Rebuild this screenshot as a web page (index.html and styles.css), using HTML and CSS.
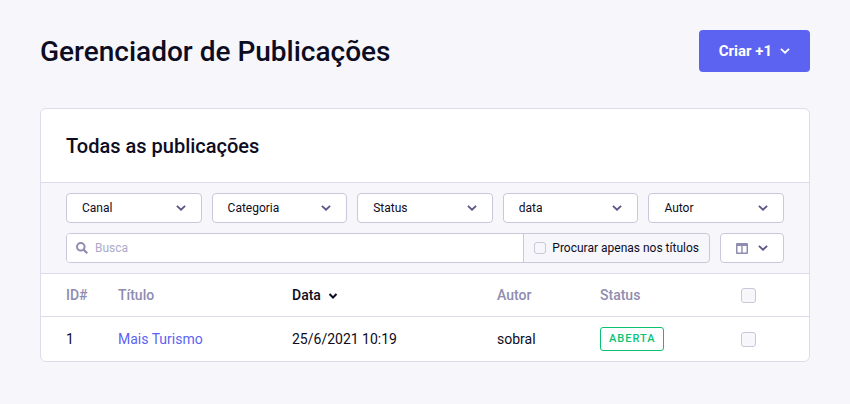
FILE: index.html
```html
<!DOCTYPE html>
<html lang="pt-BR">
<head>
<meta charset="utf-8">
<meta name="viewport" content="width=device-width, initial-scale=1">
<title>Gerenciador de Publicações</title>
<link rel="stylesheet" href="styles.css">
</head>
<body>
<svg class="sprite" aria-hidden="true">
  <symbol id="chevron" viewBox="0 0 10 10"><path d="M0.900 2.800 5 6.700 9.100 2.800" fill="none" stroke="currentColor" stroke-width="1.800"/></symbol>
</svg>
<header class="page-header">
  <h1>Gerenciador de Publicações</h1>
  <button type="button" class="create">Criar +1 <svg class="chevron"><use href="#chevron"/></svg></button>
</header>
<main class="card">
  <h2>Todas as publicações</h2>
  <form class="filters">
    <div class="filter-row">
      <div class="filter"><select aria-label="Canal"><option>Canal</option></select><svg class="chevron"><use href="#chevron"/></svg></div>
      <div class="filter"><select aria-label="Categoria"><option>Categoria</option></select><svg class="chevron"><use href="#chevron"/></svg></div>
      <div class="filter"><select aria-label="Status"><option>Status</option></select><svg class="chevron"><use href="#chevron"/></svg></div>
      <div class="filter"><select aria-label="data"><option>data</option></select><svg class="chevron"><use href="#chevron"/></svg></div>
      <div class="filter"><select aria-label="Autor"><option>Autor</option></select><svg class="chevron"><use href="#chevron"/></svg></div>
    </div>
    <div class="search-row">
      <div class="search">
        <div class="search-field">
          <svg class="search-icon" viewBox="0 0 12 12" aria-hidden="true"><circle cx="4.800" cy="4.800" r="3.800" fill="none" stroke="currentColor" stroke-width="2"/><path d="M7.700 7.700 11.200 11.200" stroke="currentColor" stroke-width="2.200"/></svg>
          <input type="search" placeholder="Busca" aria-label="Busca">
        </div>
        <label class="only-titles"><input type="checkbox" class="check check-small">Procurar apenas nos títulos</label>
      </div>
      <button type="button" class="columns" aria-label="Colunas">
        <svg class="columns-icon" viewBox="0 0 12 11"><path fill="currentColor" fill-rule="evenodd" d="M1 0H11Q12 0 12 1V10Q12 11 11 11H1Q0 11 0 10V1Q0 0 1 0ZM1.500 3V9.500H5.300V3ZM6.700 3V9.500H10.500V3Z"/></svg>
        <svg class="chevron"><use href="#chevron"/></svg>
      </button>
    </div>
  </form>
  <table>
    <colgroup><col class="col-id"><col class="col-title"><col class="col-date"><col class="col-author"><col class="col-status"><col class="col-check"></colgroup>
    <thead>
      <tr>
        <th scope="col">ID#</th>
        <th scope="col">Título</th>
        <th scope="col" class="sorted" aria-sort="descending">Data <svg class="chevron" viewBox="0 0 10 10"><path d="M1.500 3 5 6.500 8.500 3" fill="none" stroke="currentColor" stroke-width="2"/></svg></th>
        <th scope="col">Autor</th>
        <th scope="col">Status</th>
        <th scope="col"><input type="checkbox" class="check" aria-label="Selecionar todas"></th>
      </tr>
    </thead>
    <tbody>
      <tr>
        <td>1</td>
        <td><a href="#">Mais Turismo</a></td>
        <td>25/6/2021 10:19</td>
        <td>sobral</td>
        <td><span class="status">Aberta</span></td>
        <td><input type="checkbox" class="check" aria-label="Selecionar Mais Turismo"></td>
      </tr>
    </tbody>
  </table>
</main>
</body>
</html>
```
FILE: styles.css
```css
* { box-sizing: border-box; }

body {
  margin: 0;
  padding: 30px 40px;
  background: #f6f6fb;
  color: #0d0c22;
  font: 14px/20px Roboto, sans-serif;
}

h1, h2 { margin: 0; font-weight: 500; }
h1 { font-size: 28px; line-height: 44px; }
h2 { padding: 26px 25px 24px; font-size: 20px; line-height: 23px; }

button, input, select { font: inherit; color: inherit; }

.sprite { display: none; }

.chevron { display: block; flex: none; width: 10px; height: 10px; }

.page-header {
  display: flex;
  justify-content: space-between;
  align-items: flex-start;
  margin-bottom: 34px;
}

.create {
  display: flex;
  align-items: center;
  gap: 8px;
  height: 42px;
  padding: 0 20px;
  border: 0;
  border-radius: 4px;
  background: #5c63f1;
  color: #fff;
  font-size: 15px;
  font-weight: 700;
}

.card {
  overflow: hidden;
  border: 1px solid #dddcec;
  border-radius: 6px;
  background: #fff;
}

.filters {
  display: grid;
  gap: 10px;
  padding: 10px 25px;
  border: solid #dddcec;
  border-width: 1px 0;
  background: #f6f6fb;
  font-size: 12px;
}

.filter-row {
  display: grid;
  grid-template-columns: repeat(5, 1fr);
  gap: 10px;
}

.filter { display: grid; align-items: center; }
.filter > * { grid-area: 1 / 1; }
.filter .chevron { justify-self: end; margin-right: 16px; color: #5a5585; pointer-events: none; }

select {
  appearance: none;
  width: 100%;
  height: 30px;
  padding: 0 30px 0 15px;
  border: 1px solid #c9c8da;
  border-radius: 4px;
  background: #fff;
}

.search-row { display: flex; gap: 10px; }

.search {
  display: flex;
  flex: 1;
  height: 30px;
  border: 1px solid #c9c8da;
  border-radius: 4px;
}

.search-field {
  display: flex;
  flex: 1;
  align-items: center;
  gap: 7px;
  padding: 0 9px;
  border-radius: 3px 0 0 3px;
  background: #fff;
}

.search-field input {
  flex: 1;
  min-width: 0;
  padding: 0;
  border: 0;
  outline: 0;
  background: none;
}

.search-field input::placeholder { color: #adabca; }

.search-icon { width: 12px; height: 12px; color: #8e8cb0; }

.only-titles {
  display: flex;
  align-items: center;
  gap: 6px;
  padding: 0 10px;
  border-left: 1px solid #c9c8da;
}

.check {
  appearance: none;
  display: block;
  width: 15px;
  height: 15px;
  margin: 0;
  border: 1px solid #c9c8da;
  border-radius: 3px;
  background: #f6f6fb;
}

.check:checked { background: #5c63f1; }
.check-small { width: 12px; height: 12px; }

.columns {
  display: flex;
  align-items: center;
  justify-content: space-between;
  width: 64px;
  height: 30px;
  padding: 0 15px;
  border: 1px solid #c9c8da;
  border-radius: 4px;
  background: #fff;
  color: #5a5585;
}

.columns-icon { width: 12px; height: 11px; color: #8e8cb0; }

table {
  width: 100%;
  table-layout: fixed;
  border-spacing: 0;
}

.col-id { width: 77px; }
.col-title { width: 174px; }
.col-date { width: 205px; }
.col-author { width: 103px; }
.col-status { width: 141px; }
.col-check { width: 68px; }

th, td { height: 44px; padding: 0; text-align: left; }
th { height: 43px; border-bottom: 1px solid #dddcec; color: #8e8cb0; font-weight: 500; }
th:first-child, td:first-child { padding-left: 25px; }

.sorted { color: #0d0c22; }
.sorted .chevron { display: inline-block; margin-left: 4px; vertical-align: -1px; }

a { color: #5c63f1; text-decoration: none; }

.status {
  display: block;
  width: fit-content;
  padding: 1px 7px 1px 8px;
  border: 1px solid #09c372;
  border-radius: 3px;
  color: #09c372;
  font-size: 11px;
  font-weight: 500;
  letter-spacing: 1px;
  text-transform: uppercase;
}
```
